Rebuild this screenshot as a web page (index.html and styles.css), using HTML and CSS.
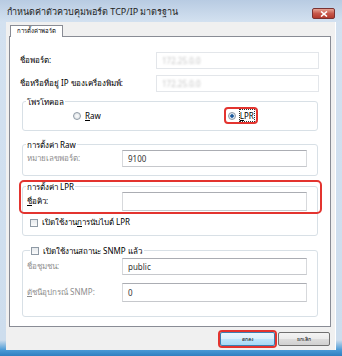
FILE: index.html
```html
<!DOCTYPE html>
<html lang="th">
<head>
  <meta charset="UTF-8">
  <title>กำหนดค่าตัวควบคุมพอร์ต TCP/IP มาตรฐาน</title>
  <link rel="stylesheet" href="styles.css">
</head>
<body>

  <div class="window">
    <div class="titlebar">
      <span class="title">กำหนดค่าตัวควบคุมพอร์ต TCP/IP มาตรฐาน</span>
      <span class="close-btn">
        <svg width="8" height="6" viewBox="0 0 8 6"><path d="M1 0.5 L7 5.5 M7 0.5 L1 5.5" stroke="#fff" stroke-width="1.6"/></svg>
      </span>
    </div>

    <div class="client">
      <div class="tabs"><span class="tab">การตั้งค่าพอร์ต</span></div>

      <div class="panel">
        <div class="row">
          <span class="label">ชื่อพอร์ต:</span>
          <div class="textbox wide"><span class="blurred">172.25.0.0</span></div>
        </div>
        <div class="row row-second">
          <span class="label">ชื่อหรือที่อยู่ IP ของเครื่องพิมพ์:</span>
          <div class="textbox wide"><span class="blurred">172.25.0.0</span></div>
        </div>

        <!-- โพรโทคอล -->
        <div class="group group-protocol">
          <span class="legend">โพรโทคอล</span>
          <div class="radios">
            <span class="radio-item radio-raw"><span class="radio"></span><span><u>R</u>aw</span></span>
            <span class="radio-item radio-lpr"><span class="radio checked"></span><span class="focus"><u>L</u>PR</span></span>
          </div>
        </div>

        <div class="group group-raw">
          <span class="legend">การตั้งค่า Raw</span>
          <div class="row inner-row">
            <span class="label disabled">หมายเลขพอร์ต:</span>
            <div class="textbox">9100</div>
          </div>
        </div>

        <div class="group group-lpr">
          <div class="mark"></div>
          <span class="legend">การตั้งค่า LPR</span>
          <div class="row inner-row">
            <span class="label"><u>ชื่</u>อคิว:</span>
            <div class="textbox tall"></div>
          </div>
          <div class="check-row"><span class="checkbox"></span><span>เปิดใช้งาน<u>ก</u>ารนับไบต์ LPR</span></div>
        </div>

        <div class="group group-snmp">
          <span class="legend legend-check"><span class="checkbox"></span><span>เปิดใช้งานสถานะ SNMP แล้ว</span></span>
          <div class="row inner-row">
            <span class="label disabled">ชื่อชุมชน:</span>
            <div class="textbox">public</div>
          </div>
          <div class="row inner-row row-index">
            <span class="label disabled"><u>ดั</u>ชนีอุปกรณ์ SNMP:</span>
            <div class="textbox tall">0</div>
          </div>
        </div>
      </div>

      <div class="buttons">
        <span class="ok-mark"><span class="btn btn-ok">ตกลง</span></span>
        <span class="btn">ยกเลิก</span>
      </div>
    </div>
  </div>

</body>
</html>
```

FILE: styles.css
```css
body { margin: 0; font-family: "Noto Sans", "DejaVu Sans", sans-serif; font-size: 8px; color: #000; }

.window {
  width: 342px;
  height: 356px;
  box-sizing: border-box;
  padding: 0 6px 6px 6px;
  background: linear-gradient(#b8cbe2, #d3e1f0 22px, #cddded 340px, #4a9ad6 350px, #2f7fc0);
}

.titlebar {
  height: 22px;
  display: flex;
  justify-content: space-between;
  align-items: flex-start;
}
.title { margin: 5px 0 0 1px; font-size: 9px; color: #1e1e1e; }
.close-btn {
  margin: 8px 1px 0 0;
  width: 21px;
  height: 9px;
  border: 1px solid #7a3232;
  border-radius: 2px;
  background: linear-gradient(#e8a595, #c7574a 50%, #b33a2c);
  display: flex;
  align-items: center;
  justify-content: center;
}

.client {
  height: 328px;
  background: #f0f0f0;
  padding: 2px 4px 0 3px;
  box-sizing: border-box;
  border-right: 1px solid #fff;
}

.tabs { display: flex; padding-left: 1px; }
.tab {
  height: 11px;
  padding: 0 6px;
  border: 1px solid #898c95;
  border-bottom: none;
  background: #fff;
  font-size: 6px;
  line-height: 11px;
  position: relative;
  top: 1px;
}

.panel {
  height: 291px;
  box-sizing: border-box;
  border: 1px solid #898c95;
  background: #fff;
  padding: 15px 11px 0 10px;
  display: flex;
  flex-direction: column;
}

.row { display: flex; justify-content: space-between; align-items: center; }
.row-second { margin-top: 6px; }
.label { font-size: 8px; }
.disabled { color: #8e8e8e; }

.textbox {
  width: 185px;
  height: 17px;
  box-sizing: border-box;
  border: 1px solid #d7d9dc;
  border-top-color: #abadb3;
  border-bottom-color: #c6c8cc;
  padding-left: 5px;
  font-size: 8px;
  line-height: 15px;
  color: #333;
}
.textbox.wide { width: 163px; border-color: #e3e6ea; }
.textbox.tall { height: 19px; line-height: 17px; }
.blurred { color: #c4c4c4; filter: blur(1px); }

.group {
  display: flex;
  flex-direction: column;
  border: 1px solid #d8e0e6;
  border-radius: 3px;
  margin: 0 1px 0 2px;
  padding: 0 10px 0 4px;
  position: relative;
}
.legend {
  align-self: flex-start;
  margin: -6px 0 0 -1px;
  padding: 0 1px;
  background: #fff;
  font-size: 8px;
  line-height: 11px;
}

.group-protocol { margin-top: 9px; height: 30px; box-sizing: border-box; }
.radios { display: flex; align-items: center; }
.radio-item { display: flex; align-items: center; gap: 4px; font-size: 8px; }
.radio-raw { margin-left: 46px; }
.radio-lpr { margin-left: 123px; padding: 1px 2px; border: 2px solid #e3342f; border-radius: 4px; }
.radio {
  width: 6px;
  height: 6px;
  border: 1px solid #8f9aa5;
  border-radius: 50%;
  background: radial-gradient(#fdfdfd, #d6dbe0);
}
.radio.checked { background: radial-gradient(#1c5a9c 0 35%, #dbe4ee 45%); }
.focus { outline: 1px dotted #333; }

.group-raw { margin-top: 13px; height: 32px; box-sizing: border-box; }

.group-lpr { margin-top: 10px; height: 50px; box-sizing: border-box; }
.mark {
  position: absolute;
  left: -4px;
  top: -7px;
  right: -5px;
  height: 30px;
  border: 2px solid #e3342f;
  border-radius: 5px;
}
.check-row { display: flex; align-items: center; gap: 4px; margin: 5px 0 0 3px; font-size: 8px; }
.checkbox {
  width: 6px;
  height: 6px;
  border: 1px solid #8f9aa5;
  background: linear-gradient(#e6e9ec, #fbfbfb);
}

.group-snmp { margin-top: 14px; height: 67px; box-sizing: border-box; }
.legend-check { display: flex; align-items: center; gap: 4px; margin-left: 3px; padding-right: 2px; }
.group-snmp .inner-row { margin-top: 2px; }
.group-snmp .row-index { margin-top: 8px; }

.buttons {
  display: flex;
  justify-content: flex-end;
  align-items: center;
  gap: 1px;
  margin-top: 3px;
  padding-right: 1px;
}
.ok-mark { border: 2px solid #e3342f; border-radius: 4px; display: flex; }
.btn {
  width: 50px;
  height: 12px;
  border: 1px solid #707070;
  border-radius: 2px;
  background: linear-gradient(#f4f4f4, #ebebeb 50%, #dddddd 50%, #d0d0d0);
  font-size: 5px;
  line-height: 12px;
  text-align: center;
}
.btn-ok { width: 53px; border-color: #3c7fb1; background: linear-gradient(#eaf6fd, #d9f0fc 50%, #bee6fd 50%, #a7d9f5); }
```
